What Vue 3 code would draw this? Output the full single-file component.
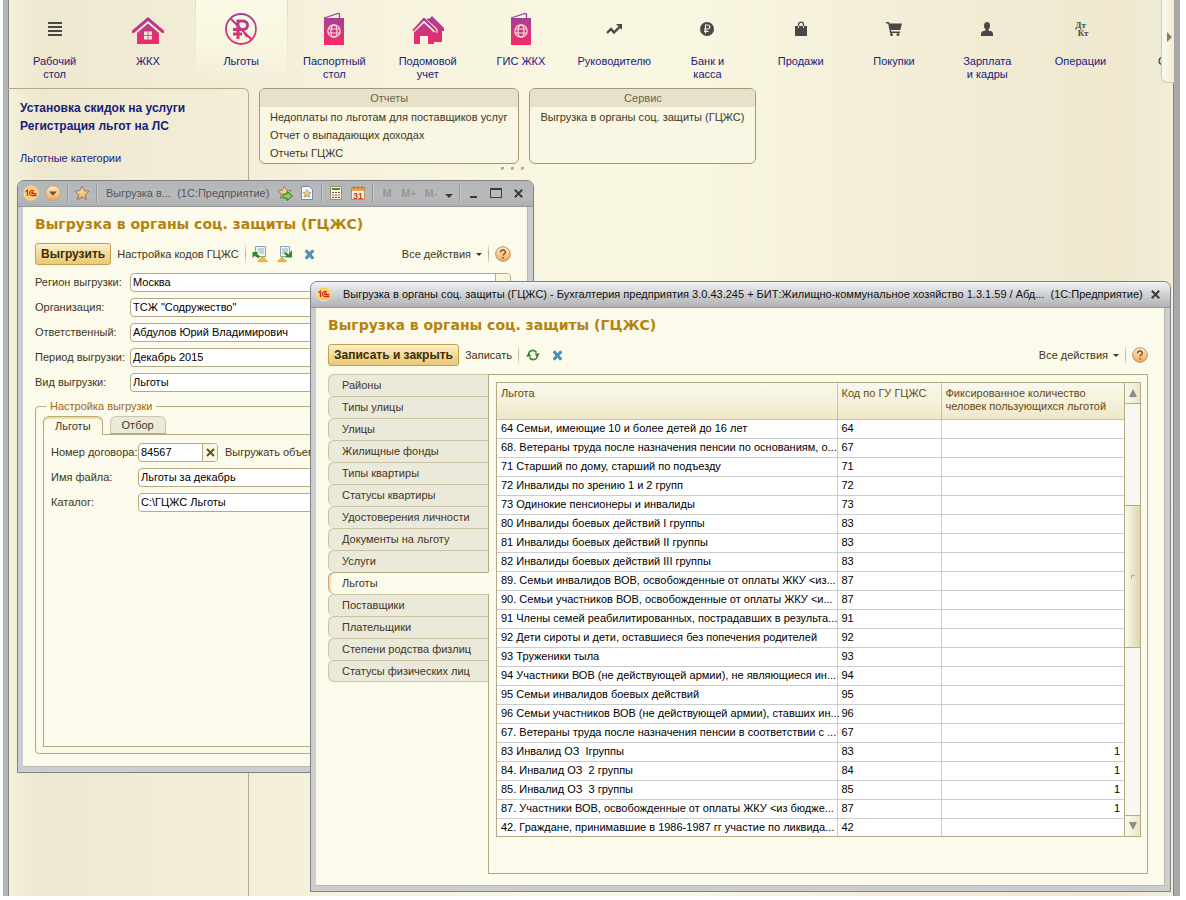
<script setup>
import { ref } from 'vue'

const sections = [
  { label: 'Рабочий стол', icon: 'desk' },
  { label: 'ЖКХ', icon: 'house' },
  { label: 'Льготы', icon: 'benefit', active: true },
  { label: 'Паспортный стол', icon: 'passport' },
  { label: 'Подомовой учет', icon: 'houses' },
  { label: 'ГИС ЖКХ', icon: 'passport' },
  { label: 'Руководителю', icon: 'chart' },
  { label: 'Банк и касса', icon: 'bank' },
  { label: 'Продажи', icon: 'bag' },
  { label: 'Покупки', icon: 'cart' },
  { label: 'Зарплата и\u00a0кадры', icon: 'person' },
  { label: 'Операции', icon: 'ledger' },
  { label: 'Склад', icon: 'none' },
]

const fields = ref([
  { id: 'region', label: 'Регион выгрузки:', value: 'Москва', pick: true },
  { id: 'org', label: 'Организация:', value: 'ТСЖ "Содружество"' },
  { id: 'resp', label: 'Ответственный:', value: 'Абдулов Юрий Владимирович' },
  { id: 'period', label: 'Период выгрузки:', value: 'Декабрь 2015' },
  { id: 'kind', label: 'Вид выгрузки:', value: 'Льготы' },
])

const contract = ref('84567')
const fileName = ref('Льготы за декабрь')
const folder = ref('C:\\ГЦЖС Льготы')

const tabs = [
  'Районы', 'Типы улицы', 'Улицы', 'Жилищные фонды', 'Типы квартиры', 'Статусы квартиры',
  'Удостоверения личности', 'Документы на льготу', 'Услуги', 'Льготы', 'Поставщики',
  'Плательщики', 'Степени родства физлиц', 'Статусы физических лиц',
]
const activeTab = ref('Льготы')

const rows = [
  ['64 Семьи, имеющие 10 и более детей до 16 лет', '64', ''],
  ['68. Ветераны труда после назначения пенсии по основаниям, о...', '67', ''],
  ['71 Старший по дому, старший по подъезду', '71', ''],
  ['72 Инвалиды по зрению 1 и 2 групп', '72', ''],
  ['73 Одинокие пенсионеры и инвалиды', '73', ''],
  ['80 Инвалиды боевых действий I группы', '83', ''],
  ['81 Инвалиды боевых действий II группы', '83', ''],
  ['82 Инвалиды боевых действий III группы', '83', ''],
  ['89. Семьи инвалидов ВОВ, освобожденные от оплаты ЖКУ <из...', '87', ''],
  ['90. Семьи участников ВОВ, освобожденные от оплаты ЖКУ <и...', '87', ''],
  ['91 Члены семей реабилитированных, пострадавших в результа...', '91', ''],
  ['92 Дети сироты и дети, оставшиеся без попечения родителей', '92', ''],
  ['93 Труженики тыла', '93', ''],
  ['94 Участники ВОВ (не действующей армии), не являющиеся ин...', '94', ''],
  ['95 Семьи инвалидов боевых действий', '95', ''],
  ['96 Семьи участников ВОВ (не действующей армии), ставших ин...', '96', ''],
  ['67. Ветераны труда после назначения пенсии в соответствии с ...', '67', ''],
  ['83 Инвалид ОЗ  Iгруппы', '83', '1'],
  ['84. Инвалид ОЗ  2 группы', '84', '1'],
  ['85. Инвалид ОЗ  3 группы', '85', '1'],
  ['87. Участники ВОВ, освобожденные от оплаты ЖКУ <из бюдже...', '87', '1'],
  ['42. Граждане, принимавшие в 1986-1987 гг участие по ликвида...', '42', ''],
]
</script>

<template>
  <div class="app">
    <svg class="defs" width="0" height="0" aria-hidden="true">
      <defs>
        <linearGradient id="pink" gradientUnits="userSpaceOnUse" x1="0" y1="2" x2="0" y2="32">
          <stop offset="0" stop-color="#9c429c" />
          <stop offset="1" stop-color="#f52a68" />
        </linearGradient>
        <linearGradient id="amber" x1="0" y1="0" x2="0" y2="1">
          <stop offset="0" stop-color="#fdeccf" />
          <stop offset="1" stop-color="#f2a94c" />
        </linearGradient>
        <radialGradient id="sun">
          <stop offset="0" stop-color="#fff9b0" />
          <stop offset="1" stop-color="#f8c63c" />
        </radialGradient>
        <symbol id="i-logo" viewBox="0 0 16 16">
          <circle cx="8" cy="8" r="7" fill="url(#sun)" stroke="#f1e6c6" />
          <path d="M2.500 6.500 4.500 5.200V11M10.800 6.300C9.500 4.900 6.600 5.400 6.600 8s2 2.600 3.400 2.500h3.500M10.500 7.800C9.600 7.200 8.500 7.400 8.600 8.100s.8.600 1.800.6h3.100" fill="none" stroke="#dd2018" stroke-width="1.300" />
        </symbol>
        <symbol id="i-star" viewBox="0 0 16 16">
          <path d="M8 1l2.100 4.700 5 .5-3.700 3.400 1.100 5L8 12.100l-4.500 2.500 1.100-5L.9 6.200l5-.5z" fill="url(#amber)" stroke="#8c7b5c" />
        </symbol>
        <symbol id="i-help" viewBox="0 0 16 16">
          <circle cx="8" cy="8" r="7.300" fill="url(#amber)" stroke="#b8906a" />
          <path d="M5.500 6.200C5.600 3.300 10.400 3.200 10.400 6c0 1.700-2.300 1.800-2.300 3.600M8.100 11v1.600" fill="none" stroke="#74522f" stroke-width="1.400" />
        </symbol>
        <symbol id="i-x" viewBox="0 0 12 12">
          <path d="M2 1.500l8 9M10 1.500l-8 9" stroke="#3a6f98" stroke-width="3.200" />
          <path d="M2 1.500l8 9M10 1.500l-8 9" stroke="#4f93c4" stroke-width="2" />
        </symbol>
        <symbol id="i-close" viewBox="0 0 12 12">
          <path d="M2 2l8 8M10 2l-8 8" stroke="#3c3c3c" stroke-width="2.200" />
        </symbol>
      </defs>
    </svg>

    <nav class="sections">
      <a v-for="s in sections" :key="s.label" href="#" class="section" :class="{ active: s.active }">
        <span class="pic">
          <svg v-if="s.icon === 'desk'" width="14" height="14" viewBox="0 0 14 14"><path d="M0 1h14M0 5h14M0 9h14M0 13h14" stroke="#484848" stroke-width="2" /></svg>
          <svg v-else-if="s.icon === 'house'" width="32" height="32" viewBox="0 0 32 32" fill="url(#pink)">
            <path d="M16 4 32 17.500v2.500h-2L16 8 2 20H0v-2.500z" />
            <path d="M16 10.500 27 20v11H5V20z" />
            <path d="M12 18.500h8v8h-8z" fill="#f8e9d8" />
            <path d="M16 18.500v8M12 22.500h8" fill="none" stroke="#dc4f86" stroke-width="1" />
          </svg>
          <svg v-else-if="s.icon === 'benefit'" width="32" height="32" viewBox="0 0 32 32" fill="none" stroke="url(#pink)">
            <circle cx="16" cy="16" r="15" stroke-width="1.800" />
            <path d="M13 26V8h5c6 0 6 8.500 0 8.500H8M8 21h9" stroke-width="3" />
            <path d="M6 6l21 21M17 16l5 8" stroke-width="2" />
          </svg>
          <svg v-else-if="s.icon === 'passport'" width="22" height="34" viewBox="0 0 22 34">
            <path d="M1 6 15 1.500l1.500.5v4" fill="none" stroke="#93489b" stroke-width="1.300" />
            <path d="M1 6h20v27H1z" fill="url(#pink)" />
            <g fill="none" stroke="#f8e3dc" stroke-width="1.200"><circle cx="11" cy="19" r="6.200" /><ellipse cx="11" cy="19" rx="3" ry="6.200" /><path d="M5 17h12M5 21h12" /></g>
          </svg>
          <svg v-else-if="s.icon === 'houses'" width="32" height="32" viewBox="0 0 32 32" fill="url(#pink)">
            <path d="M20 3 32 15v3h-2v11h-8V14l-8-7 2-2 1 1z" />
            <path d="M12 4 25 17l-1.500 2L12 8 1.500 19 0 17z" stroke="#f6ecdc" stroke-width=".8" />
            <path d="M12 10 22 19.500V31h-6v-8h-8v8H2V19.500z" />
            <path d="M16 8l9 8v4" fill="none" stroke="#f6dfdc" stroke-width="1" />
          </svg>
          <svg v-else-if="s.icon === 'chart'" width="16" height="12" viewBox="0 0 16 12"><path d="M1 10l4-4 3 3.500L13.500 4" fill="none" stroke="#484848" stroke-width="2.400" /><path d="M10 1h6v6z" fill="#484848" /></svg>
          <svg v-else-if="s.icon === 'bank'" width="14" height="14" viewBox="0 0 14 14"><circle cx="7" cy="7" r="7" fill="#484848" /><path d="M5.500 11.500V3h2.300c2.700 0 2.700 4 0 4H4M4 9.300h4.500" fill="none" stroke="#f6f1dc" stroke-width="1.200" /></svg>
          <svg v-else-if="s.icon === 'bag'" width="14" height="16" viewBox="0 0 14 16"><path d="M1 5h12v10H1z" fill="#484848" /><path d="M4.500 7V3.500c0-3.300 5-3.300 5 0V7" fill="none" stroke="#484848" stroke-width="1.300" /><path d="M4.500 5v2M9.500 5v2" stroke="#f3eed8" /></svg>
          <svg v-else-if="s.icon === 'cart'" width="16" height="14" viewBox="0 0 16 14" fill="#484848"><path d="M0 0h3l.6 1.500H16L14.300 8H5l.2 1.500h9V11H4L2.200 1.500H0z" /><circle cx="5.500" cy="12.500" r="1.500" /><circle cx="12" cy="12.500" r="1.500" /></svg>
          <svg v-else-if="s.icon === 'person'" width="12" height="14" viewBox="0 0 12 14" fill="#484848"><ellipse cx="6" cy="3.800" rx="3" ry="3.800" /><path d="M4.500 7h3v1.500C10.500 9 12 9.500 12 12v2H0v-2c0-2.500 1.500-3 4.500-3.500z" /></svg>
          <span v-else-if="s.icon === 'ledger'" class="ledger"><span>Дт</span><span>Кт</span></span>
        </span>
        <span class="caption">{{ s.label }}</span>
      </a>
      <button class="scroller" aria-label="Далее"><svg width="5" height="10" viewBox="0 0 5 10"><path d="M0 0l5 5-5 5z" fill="#84816b" /></svg></button>
    </nav>

    <div class="desk">
      <aside class="links">
        <a href="#" class="strong">Установка скидок на услуги</a>
        <a href="#" class="strong">Регистрация льгот на ЛС</a>
        <a href="#" class="plain">Льготные категории</a>
      </aside>
      <div class="board">
        <div class="cards">
          <section class="card">
            <h2>Отчеты</h2>
            <a href="#">Недоплаты по льготам для поставщиков услуг</a>
            <a href="#">Отчет о выпадающих доходах</a>
            <a href="#">Отчеты ГЦЖС</a>
          </section>
          <section class="card">
            <h2>Сервис</h2>
            <a href="#">Выгрузка в органы соц. защиты (ГЦЖС)</a>
          </section>
        </div>
        <div class="grip"><i></i><i></i><i></i></div>
      </div>
    </div>

    <section class="window export">
      <header class="bar dim">
        <svg width="16" height="16"><use href="#i-logo" /></svg>
        <button class="ico" aria-label="Меню"><svg width="16" height="16" viewBox="0 0 16 16"><circle cx="8" cy="8" r="7.300" fill="url(#amber)" stroke="#c9a47a" /><path d="M4 6.500h8L8 10.500z" fill="#5a5048" /></svg></button>
        <i class="split"></i>
        <button class="ico" aria-label="В избранное"><svg width="16" height="16"><use href="#i-star" /></svg></button>
        <i class="split"></i>
        <span class="caption">Выгрузка в... &nbsp;(1С:Предприятие)</span>
        <button class="ico" aria-label="Добавить в избранное"><svg width="16" height="16" viewBox="0 0 16 16"><use href="#i-star" width="15" height="15" /><path d="M6 9h4V6.500l5.500 4.500L10 15.500V13H6z" fill="#8fd05a" stroke="#2f7a1c" /></svg></button>
        <button class="ico" aria-label="Избранное"><svg width="16" height="16" viewBox="0 0 16 16"><path d="M2.500 1.500h8l3 3v10h-11z" fill="#f4f8fb" stroke="#6f8ea6" /><use href="#i-star" x="3.500" y="4" width="9" height="9" /></svg></button>
        <i class="split"></i>
        <button class="ico" aria-label="Калькулятор"><svg width="16" height="16" viewBox="0 0 16 16"><path d="M2.500 1.500h11v13h-11z" fill="#fdf7e2" stroke="#a08b60" /><path d="M4 3h8v2H4z" fill="#3f8a2c" /><path d="M4 7.500h2m1 0h2m1 0h2M4 10h2m1 0h2m1 0h2M4 12.500h2m1 0h2" stroke="#7b5a36" /><path d="M10 12.500h2" stroke="#d22" /></svg></button>
        <button class="ico" aria-label="Календарь"><svg width="16" height="16" viewBox="0 0 16 16"><path d="M1.500 2.500h13v12h-13z" fill="#fdf0dc" stroke="#b98d5a" /><path d="M2 3h12v3H2z" fill="#eda24e" /><path d="M4 1v3M8 1v3M12 1v3" stroke="#9a6a35" /><text x="3" y="13.500" font-size="9" font-weight="bold" fill="#d43a20">31</text></svg></button>
        <i class="split"></i>
        <button class="mem">M</button><button class="mem">M+</button><button class="mem">M-</button>
        <button class="ico slim" aria-label="Ещё"><svg width="8" height="12" viewBox="0 0 8 12"><path d="M0 7h8L4 11z" fill="#3c3c3c" /></svg></button>
        <i class="split"></i>
        <button class="ico" aria-label="Свернуть"><svg width="12" height="12" viewBox="0 0 12 12"><path d="M2 10h7" stroke="#3c3c3c" stroke-width="2" /></svg></button>
        <button class="ico" aria-label="Развернуть"><svg width="12" height="12" viewBox="0 0 12 12"><path d="M.5 1.500h11v9H.5zM0 2.500h12" fill="none" stroke="#3c3c3c" /></svg></button>
        <button class="ico" aria-label="Закрыть"><svg width="11" height="11"><use href="#i-close" /></svg></button>
      </header>
      <div class="body">
        <h1>Выгрузка в органы соц. защиты (ГЦЖС)</h1>
        <div class="toolbar">
          <button class="main">Выгрузить</button>
          <button class="flat">Настройка кодов ГЦЖС</button>
          <i class="rule"></i>
          <button class="ico wide" aria-label="Загрузить настройки"><svg width="16" height="16" viewBox="0 0 16 16"><path d="M3.500.5h10v10h-10z" fill="#f2f6f8" stroke="#8aa1ad" /><path d="M6 3h6M6 5h6M8 7h4" stroke="#90a8b8" /><path d="M6 15.500 10.500 10l5 5.500z" fill="#edbd3e" stroke="#c18e26" stroke-width=".6" /><path d="M.5 6h6L5 7.500l3 3L6 12.500l-3-3L.5 12z" fill="#2f8a24" /></svg></button>
          <button class="ico wide" aria-label="Сохранить настройки"><svg width="16" height="16" viewBox="0 0 16 16"><path d="M3.500.5h9v10h-9z" fill="#f2f6f8" stroke="#8aa1ad" /><path d="M5 3h6M5 5h6M5 7h4" stroke="#90a8b8" /><path d="M.5 15.500 5 11l5 4.500z" fill="#edbd3e" stroke="#c18e26" stroke-width=".6" /><path d="M15 4v7.500H8L9.500 10 7 7.500 9 6l2.500 2.500z" fill="#2f8a24" /></svg></button>
          <button class="ico wide" aria-label="Очистить"><svg width="11" height="11"><use href="#i-x" /></svg></button>
          <button class="flat all">Все действия <svg width="6" height="3" viewBox="0 0 6 3"><path d="M0 0h6L3 3z" fill="#3f3622" /></svg></button>
          <i class="rule"></i>
          <button class="ico help" aria-label="Справка"><svg width="16" height="16"><use href="#i-help" /></svg></button>
        </div>
        <form class="form" @submit.prevent>
          <div v-for="f in fields" :key="f.id" class="row">
            <label :for="f.id">{{ f.label }}</label>
            <span class="box"><input :id="f.id" v-model="f.value" type="text"><button v-if="f.pick" type="button" aria-label="Выбрать"></button></span>
          </div>
          <fieldset>
            <legend>Настройка выгрузки</legend>
            <div class="htabs"><button type="button" class="on">Льготы</button><button type="button">Отбор</button></div>
            <div class="pane">
              <div class="row">
                <label for="contract">Номер договора:</label>
                <span class="box short"><input id="contract" v-model="contract" type="text"><button type="button" aria-label="Очистить" @click="contract = ''"><svg width="9" height="9" viewBox="0 0 9 9"><path d="M1 1l7 7M8 1l-7 7" stroke="#63561f" stroke-width="2" /></svg></button></span>
                <span class="note">Выгружать объемы</span>
              </div>
              <div class="row"><label for="file">Имя файла:</label><span class="box"><input id="file" v-model="fileName" type="text"></span></div>
              <div class="row"><label for="folder">Каталог:</label><span class="box"><input id="folder" v-model="folder" type="text"></span></div>
            </div>
          </fieldset>
        </form>
      </div>
    </section>

    <section class="window codes">
      <header class="bar">
        <svg width="16" height="16"><use href="#i-logo" /></svg>
        <span class="caption">Выгрузка в органы соц. защиты (ГЦЖС) - Бухгалтерия предприятия 3.0.43.245 + БИТ:Жилищно-коммунальное хозяйство 1.3.1.59 / Абд... &nbsp;(1С:Предприятие)</span>
        <button class="ico" aria-label="Закрыть"><svg width="11" height="11"><use href="#i-close" /></svg></button>
      </header>
      <div class="body">
        <h1>Выгрузка в органы соц. защиты (ГЦЖС)</h1>
        <div class="toolbar">
          <button class="main">Записать и закрыть</button>
          <button class="flat">Записать</button>
          <i class="rule"></i>
          <button class="ico wide" aria-label="Обновить"><svg width="14" height="14" viewBox="0 0 14 14"><path d="M2.500 6C3 2 8.500 1 10.500 4.500M11.500 8c-.5 4-6 5-8 1.500" fill="none" stroke="#3b8a28" stroke-width="1.600" /><path d="M8.500 5.500h5.500L11.200 9zM0 8.500h5.500L2.800 5z" fill="#2c7a1c" /></svg></button>
          <button class="ico wide" aria-label="Очистить"><svg width="11" height="11"><use href="#i-x" /></svg></button>
          <button class="flat all">Все действия <svg width="6" height="3" viewBox="0 0 6 3"><path d="M0 0h6L3 3z" fill="#3f3622" /></svg></button>
          <i class="rule"></i>
          <button class="ico help" aria-label="Справка"><svg width="16" height="16"><use href="#i-help" /></svg></button>
        </div>
        <div class="split-view">
          <div class="vtabs">
            <button v-for="t in tabs" :key="t" :class="{ on: t === activeTab }" @click="activeTab = t">{{ t }}</button>
          </div>
          <div class="sheet">
            <div class="grid">
              <div class="viewport">
                <table>
                  <colgroup><col><col class="c2"><col class="c3"></colgroup>
                  <thead><tr><th>Льгота</th><th>Код по ГУ ГЦЖС</th><th>Фиксированное количество человек пользующихся льготой</th></tr></thead>
                  <tbody>
                    <tr v-for="r in rows" :key="r[0]"><td>{{ r[0] }}</td><td>{{ r[1] }}</td><td class="num">{{ r[2] }}</td></tr>
                  </tbody>
                </table>
              </div>
              <div class="scroll">
                <button aria-label="Вверх"><svg width="8" height="8" viewBox="0 0 8 8"><path d="M4 0l4 8H0z" fill="#8c8c88" /></svg></button>
                <div class="track"><div class="thumb"><i></i></div></div>
                <button aria-label="Вниз"><svg width="8" height="8" viewBox="0 0 8 8"><path d="M0 0h8L4 8z" fill="#8c8c88" /></svg></button>
              </div>
            </div>
          </div>
        </div>
      </div>
    </section>
  </div>
</template>

<style>
html, body { margin: 0; height: 100%; background: #fff; overflow: hidden; }
</style>

<style scoped>
.app, .app * { box-sizing: border-box; }
.app {
  position: relative;
  display: flex;
  flex-direction: column;
  height: calc(100vh - 4px);
  margin: 0 6px 0 3px;
  border: solid #a9a9a9;
  border-width: 0 6px 0 5px;
  border-left-color: #b4b4b4;
  box-shadow: inset 1px 0 #868686, inset -1px 0 #868686;
  overflow: hidden;
  font: 11px/13px "Liberation Sans", Arial, sans-serif;
  color: #3f3622;
  background: linear-gradient(90deg, #f3f1dc 0, #efe8d0 28px, #f1ead4 10%, #f6f2de 30%, #f9f6e2 50%, #f8f5e0 60%, #f3edd7 78%, #efe8cf 95%, #f1edd9 100%);
}
.defs { position: absolute; }
button { font: inherit; color: inherit; background: none; border: 0; padding: 0; margin: 0; cursor: pointer; }
a { text-decoration: none; color: inherit; }
svg { display: block; flex: none; }
h1, h2 { margin: 0; }

.sections { position: relative; display: flex; height: 88px; flex: none; overflow: hidden; }
.section { flex: 0 0 8%; display: flex; flex-direction: column; align-items: center; padding-top: 12px; color: #16217c; text-align: center; }
.section.active { background: linear-gradient(#fbf9e5, #f9f6e1 50%, rgba(249, 246, 225, 0) 80px); border: solid #e6dfc6; border-width: 0 1px; border-image: linear-gradient(#e3dcc4, rgba(227, 220, 196, 0)) 1; }
.pic { display: flex; align-items: center; justify-content: center; height: 34px; margin-bottom: 9px; }
.section .caption { display: flex; justify-content: center; max-width: 64px; }
.ledger { display: flex; flex-direction: column; font: bold 9px/8px "Liberation Serif", serif; color: #484848; }
.ledger span + span { padding-left: 5px; }
.scroller { position: absolute; right: 0; top: 0; width: 13px; height: 83px; display: flex; align-items: center; padding: 0 0 8px 5px; border: solid #cfc8b0; border-width: 0 0 1px 1px; border-radius: 0 0 0 6px; background: linear-gradient(90deg, #fbfaee, #f1ecd7); }

.desk { display: flex; flex: 1; }
.links { display: flex; flex-direction: column; width: 241px; padding: 10px 12px; border: solid #b3ab84; border-width: 1px 1px 0 0; border-radius: 0 6px 0 0; color: #16217c; line-height: 18px; }
.strong { font-weight: bold; font-size: 12px; }
.plain { margin-top: 14px; }
.board { padding-left: 10px; }
.cards { display: flex; gap: 10px; }
.card { display: flex; flex-direction: column; min-height: 76px; padding: 0 11px 0 10px; border: 1px solid #a09972; border-radius: 6px; line-height: 18px; background: #f9f6e4; overflow: hidden; }
.card h2 { margin: 0 -11px 1px -10px; font: inherit; color: #6b6450; text-align: center; background: #e6e1c8; height: 18px; }
.grip { display: flex; justify-content: center; gap: 7px; margin-top: 3px; padding-left: 10px; }
.grip i { width: 3px; height: 3px; border: solid #b1ab91; border-width: 2px 0 0 2px; }

.window { position: absolute; display: flex; flex-direction: column; padding: 0 5px 5px; border: 1px solid #808284; border-radius: 7px 7px 0 0; background: #cbcdd0; }
.export { left: 9px; top: 180px; width: 517px; min-height: 593px; }
.codes { left: 302px; right: 3px; top: 281px; bottom: 4px; }
.bar { display: flex; align-items: center; gap: 6px; height: 26px; flex: none; margin: 0 -5px; padding: 0 7px 1px 5px; border-radius: 6px 6px 0 0; border-bottom: 1px solid #96979a; background: linear-gradient(#f2f3f4, #cfd0d2 50%, #b2b3b6); color: #111; }
.bar.dim { background: linear-gradient(#b4b5b7, #b9babc 60%, #aeafb1); color: #55565a; }
.bar .caption { flex: 1; min-width: 0; white-space: nowrap; }
.dim .caption { padding-left: 3px; }
.codes .bar .caption { padding-left: 5px; }
.ico { display: flex; align-items: center; justify-content: center; width: 16px; height: 16px; flex: none; }
.split { width: 1px; height: 18px; background: #96979a; box-shadow: 1px 0 #c8c9cb; }
.mem { width: 16px; font-weight: bold; color: #9a9694; }
.ico.slim { width: 8px; }
.body { flex: 1; min-height: 0; display: flex; flex-direction: column; padding: 7px 16px 11px 12px; background: #fcfaeb; border: solid #b7b8b4; border-width: 0 1px 1px 0; }
h1 { font: bold 14px/20px "DejaVu Sans", Verdana, sans-serif; color: #b5830b; white-space: nowrap; }
.toolbar { display: flex; align-items: center; height: 22px; margin: 9px 0 8px; flex: none; }
.main { height: 22px; padding: 0 5px; border: 1px solid #c5a04a; border-radius: 3px; font-weight: bold; font-size: 12px; color: #3b2e08; background: linear-gradient(#fcefcb, #f3d996 55%, #e9c878); }
.flat { margin-left: 6px; white-space: nowrap; }
.flat.all { display: flex; align-items: center; gap: 5px; margin-left: auto; }
.rule { width: 1px; height: 18px; margin-left: 6px; background: linear-gradient(#efe9cf, #b3ab84, #efe9cf); }
.ico.wide { margin-left: 6px; }
.ico.wide + .ico.wide { margin-left: 9px; }
.ico.help { margin-left: 6px; }

.row { display: flex; align-items: center; height: 19px; margin-bottom: 6px; }
.row label { width: 95px; flex: none; white-space: nowrap; }
.box { flex: 1; min-width: 0; display: flex; height: 19px; border: 1px solid #b3ab84; border-radius: 4px; background: #fff; overflow: hidden; }
.box input { flex: 1; min-width: 0; border: 0; outline: 0; padding: 0 2px; font: inherit; color: #000; background: none; }
.box button { display: flex; align-items: center; justify-content: center; width: 15px; flex: none; border-left: 1px solid #b3ab84; background: #f8f5e2; }
.box.short { flex: 0 0 80px; }
.note { margin-left: 7px; white-space: nowrap; }
fieldset { margin: 8px 0 0; padding: 3px 7px 6px; border: 1px solid #b3ab84; border-radius: 4px; min-width: 0; }
legend { margin-left: 3px; padding: 0 4px; color: #a3690f; }
.htabs { display: flex; gap: 7px; position: relative; margin-bottom: -1px; }
.htabs button { height: 18px; padding: 1px 11px 0; border: 1px solid #cdc6a8; border-bottom-color: #b3ab84; border-radius: 6px 6px 0 0; background: #ebe9da; }
.htabs .on { height: 19px; border-color: #b3ab84; border-bottom-color: #fcfaeb; background: #fcfaeb; box-shadow: inset 0 2px #f9dd9c; }
.pane { min-height: 313px; padding: 8px 7px; border: 1px solid #b3ab84; }
.pane label { width: 87px; }

.split-view { flex: 1; display: flex; min-height: 0; }
.vtabs { display: flex; flex-direction: column; width: 161px; margin-right: -1px; flex: none; }
.vtabs button { height: 22px; padding: 0 0 0 13px; text-align: left; border: solid #c9c3a4; border-width: 1px 1px 0 1px; border-right-color: #b3ab84; border-radius: 6px 0 0 6px; background: #ebe9da; }
.vtabs button:last-child { border-bottom-width: 1px; }
.vtabs .on { position: relative; border-color: #b3ab84; border-right-color: #fcfaeb; background: #fcfaeb; box-shadow: inset 2px 0 #f9dd9c; }
.sheet { flex: 1; min-width: 0; display: flex; flex-direction: column; padding: 7px 6px 36px 7px; border: 1px solid #b3ab84; }
.grid { flex: 1; min-height: 0; display: flex; border: 1px solid #b3ab84; background: #fff; }
.viewport { flex: 1; min-width: 0; overflow: hidden; }
table { width: 100%; border-collapse: collapse; table-layout: fixed; }
.c2 { width: 104px; }
.c3 { width: 183px; }
th { height: 36px; padding: 4px 4px 0; font-weight: normal; text-align: left; vertical-align: top; color: #66490f; border-right: 1px solid #c9c3a4; border-bottom: 1px solid #c9c3a4; background: linear-gradient(#faf8ec, #f5f1dc 50%, #eee7c8); }
td { height: 19px; padding: 0 0 0 4px; color: #000; white-space: pre; border-right: 1px solid #c9cdd0; border-bottom: 1px solid #c9cdd0; }
th:last-child, td:last-child { border-right: 0; }
.num { padding-right: 4px; text-align: right; }
.scroll { display: flex; flex-direction: column; width: 16px; flex: none; border-left: 1px solid #b3ab84; background: #f8f7f3; }
.scroll button { display: flex; align-items: center; justify-content: center; height: 21px; flex: none; background: linear-gradient(90deg, #fbf9ec, #ece6c6); border-bottom: 1px solid #b3ab84; }
.scroll button:last-child { border: 0; border-top: 1px solid #b3ab84; }
.track { flex: 1; padding-top: 101px; }
.thumb { display: flex; align-items: center; justify-content: center; height: 143px; border: solid #b3ab84; border-width: 1px 0; background: linear-gradient(90deg, #fbf9ec, #ddd6ae); }
.thumb i { width: 4px; height: 4px; border: solid #b9b290; border-width: 1px 0 0 1px; }
</style>
